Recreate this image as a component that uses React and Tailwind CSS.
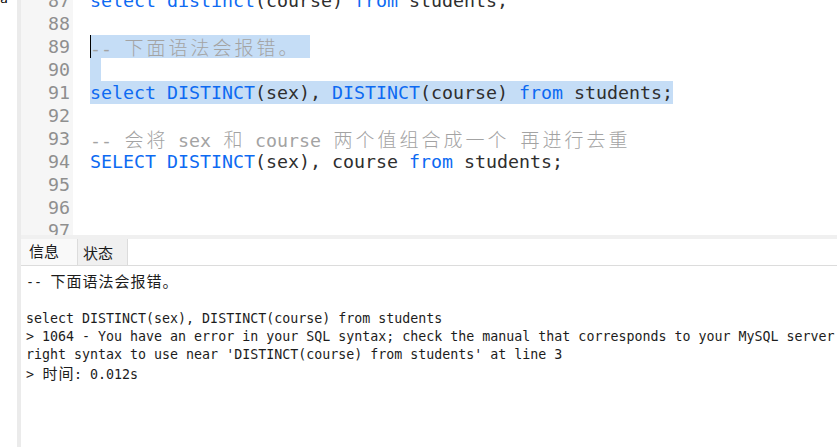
import React from "react";

const MONO = { fontFamily: '"DejaVu Sans Mono", "Liberation Mono", monospace' };

const isCJK = (ch) => /[\u3000-\u9fff\uff00-\uffef]/.test(ch);

function Cjk({ text, cell, cls }) {
  const out = [];
  let buf = "";
  const flush = (k) => {
    if (buf) {
      out.push(<span key={"a" + k}>{buf}</span>);
      buf = "";
    }
  };
  [...text].forEach((ch, i) => {
    if (isCJK(ch)) {
      flush(i);
      out.push(
        <span
          key={i}
          className={`inline-block text-center ${cell} ${cls}`}
          style={{ fontFamily: '"Noto Sans CJK SC", sans-serif' }}
        >
          {ch}
        </span>
      );
    } else buf += ch;
  });
  flush("end");
  return <>{out}</>;
}

const K = ({ children }) => <span className="text-[#0d6af2]">{children}</span>;
const D = ({ children }) => <span className="text-[#2e2e2e]">{children}</span>;
const C = ({ children }) => (
  <span className="text-[#a3a3a3]">
    <Cjk text={children} cell="w-[22px]" cls="text-[19px] font-light" />
  </span>
);

const lines = [
  { n: 87, c: (<><K>select distinct</K><D>(course) </D><K>from</K><D> students;</D></>) },
  { n: 88, c: null },
  { n: 89, c: <C>-- 下面语法会报错。</C>, sel: "w-[220px]", cursor: true },
  { n: 90, c: null, sel: "w-[11px]" },
  { n: 91, c: (<><K>select DISTINCT</K><D>(sex), </D><K>DISTINCT</K><D>(course) </D><K>from</K><D> students;</D></>), sel: "w-[583px]" },
  { n: 92, c: null },
  { n: 93, c: <C>-- 会将 sex 和 course 两个值组合成一个 再进行去重</C> },
  { n: 94, c: (<><K>SELECT DISTINCT</K><D>(sex), course </D><K>from</K><D> students;</D></>) },
  { n: 95, c: null },
  { n: 96, c: null },
  { n: 97, c: null },
];

export default function App() {
  return (
    <div className="w-[837px] h-[447px] overflow-hidden bg-white flex" style={MONO}>
      <div className="w-[17px] shrink-0 overflow-hidden">
        <div className="text-[13px] leading-[13px] text-black mt-[-8px] pl-[0px]">a</div>
      </div>
      <div className="w-[4px] shrink-0 bg-[#ebebeb]" />
      <div className="flex-1 min-w-0 flex flex-col">
        {/* editor */}
        <div className="h-[235px] shrink-0 overflow-hidden flex">
          <div className="w-[52px] shrink-0 bg-[#f6f6f6] pr-[3px]">
            <div className="mt-[-11px]">
              {lines.map((l) => (
                <div key={l.n} className="h-[23px] leading-[23px] text-right text-[18.27px] text-[#8f8f8f]">
                  {l.n}
                </div>
              ))}
            </div>
          </div>
          <div className="flex-1 min-w-0 pl-[17px]">
            <div className="mt-[-11px]">
              {lines.map((l) => (
                <div key={l.n} className="h-[23px] leading-[23px] text-[18.27px] whitespace-pre relative">
                  {l.sel && <div className={`absolute left-0 top-0 h-[23px] bg-[#c5ddf6] ${l.sel}`} />}
                  {l.cursor && <div className="absolute left-0 top-0 h-[23px] w-[1px] bg-black" />}
                  <span className="relative">{l.c}</span>
                </div>
              ))}
            </div>
          </div>
        </div>
        <div className="h-[4px] shrink-0 bg-[#f0f0f0]" />
        {/* tabs */}
        <div
          className="h-[27px] shrink-0 flex border-b border-[#dcdcdc] text-[15px] text-[#1a1a1a]"
          style={{ fontFamily: '"Noto Sans CJK SC", sans-serif' }}
        >
          <div className="w-[57px] bg-[#f9f9f9] border-r border-[#dcdcdc] pl-[8px] leading-[24px]">信息</div>
          <div className="w-[50px] bg-[#f0f0f0] border-r border-[#dcdcdc] pl-[5px] leading-[28px]">状态</div>
        </div>
        {/* messages */}
        <div className="flex-1 pt-[6px] pl-[5px] text-[13.3px] leading-[18px] text-[#1c1c1c] whitespace-pre overflow-hidden">
          <div><Cjk text="-- 下面语法会报错。" cell="w-[16px]" cls="text-[15px]" /></div>
          <div>&nbsp;</div>
          <div>select DISTINCT(sex), DISTINCT(course) from students</div>
          <div>&gt; 1064 - You have an error in your SQL syntax; check the manual that corresponds to your MySQL server version for the</div>
          <div>right syntax to use near 'DISTINCT(course) from students' at line 3</div>
          <div><Cjk text="> 时间: 0.012s" cell="w-[16px]" cls="text-[15px]" /></div>
        </div>
      </div>
    </div>
  );
}
